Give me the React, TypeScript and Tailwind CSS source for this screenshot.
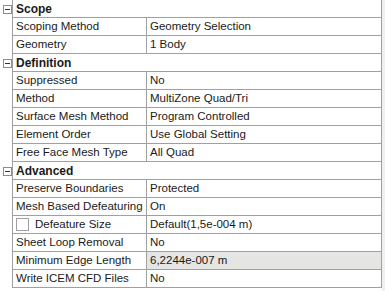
import React from 'react';

type Row =
  | { kind: 'header'; label: string }
  | { kind: 'prop'; label: string; value: string; check?: boolean; shaded?: boolean };

const rows: Row[] = [
  { kind: 'header', label: 'Scope' },
  { kind: 'prop', label: 'Scoping Method', value: 'Geometry Selection' },
  { kind: 'prop', label: 'Geometry', value: '1 Body' },
  { kind: 'header', label: 'Definition' },
  { kind: 'prop', label: 'Suppressed', value: 'No' },
  { kind: 'prop', label: 'Method', value: 'MultiZone Quad/Tri' },
  { kind: 'prop', label: 'Surface Mesh Method', value: 'Program Controlled' },
  { kind: 'prop', label: 'Element Order', value: 'Use Global Setting' },
  { kind: 'prop', label: 'Free Face Mesh Type', value: 'All Quad' },
  { kind: 'header', label: 'Advanced' },
  { kind: 'prop', label: 'Preserve Boundaries', value: 'Protected' },
  { kind: 'prop', label: 'Mesh Based Defeaturing', value: 'On' },
  { kind: 'prop', label: 'Defeature Size', value: 'Default(1,5e-004 m)', check: true },
  { kind: 'prop', label: 'Sheet Loop Removal', value: 'No' },
  { kind: 'prop', label: 'Minimum Edge Length', value: '6,2244e-007 m', shaded: true },
  { kind: 'prop', label: 'Write ICEM CFD Files', value: 'No' },
];

function Collapse() {
  return (
    <div className="w-[9px] h-[9px] border border-[#8c8c8c] bg-white flex items-center justify-center">
      <div className="w-[5px] h-px bg-[#333]" />
    </div>
  );
}

export default function App() {
  return (
    <div
      className="flex w-[385px] h-[291px] bg-white text-[11.5px] text-[#1a1a1a] leading-none"
      style={{ fontFamily: '"Liberation Sans", Arial, sans-serif' }}
    >
      <div className="w-[382px] flex flex-col">
        {rows.map((r, i) => (
          <div key={i} className="flex h-[18px]">
            <div className="w-[12px] flex items-center justify-center pl-[2px]">
              {r.kind === 'header' && <Collapse />}
            </div>
            <div
              className={`flex-1 flex whitespace-nowrap border-l border-r border-b border-[#a0a0a0] ${i === 0 ? 'border-t h-[19px] -mt-px' : ''}`}
            >
              {r.kind === 'header' ? (
                <div className="flex items-center pl-[3px] font-bold text-[12px]">{r.label}</div>
              ) : (
                <>
                  <div className="w-[134px] flex items-center pl-[3px] border-r border-[#a0a0a0] overflow-hidden">
                    {r.check && (
                      <div className="w-[13px] h-[13px] shrink-0 border border-[#a0a0a0] bg-white mr-[6px]" />
                    )}
                    {r.label}
                  </div>
                  <div className={`flex-1 flex items-center pl-[3px] ${r.shaded ? 'bg-[#e5e5e3]' : ''}`}>
                    {r.value}
                  </div>
                </>
              )}
            </div>
          </div>
        ))}
      </div>
      <div className="w-[3px] bg-[#f0f0f0]" />
    </div>
  );
}
